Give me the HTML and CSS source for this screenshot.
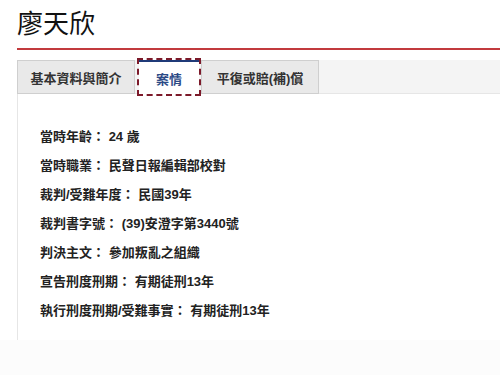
FILE: index.html
```html
<!DOCTYPE html>
<html lang="zh-Hant">
  <head>
    <meta charset="UTF-8" />
    <meta name="viewport" content="width=device-width, initial-scale=1.0" />
    <title>廖天欣</title>
    <link rel="stylesheet" href="styles.css">
  </head>
  <body>
    <div class="page">
      <div class="header">
        <h1>廖天欣</h1>
      </div>

      <div class="tabs">
        <div class="tab wide">基本資料與簡介</div>
        <div class="tab active">案情</div>
        <div class="tab wide">平復或賠(補)償</div>
      </div>

      <div class="panel">
        <div class="row"><span class="label">當時年齡：</span> 24 歲</div>
        <div class="row"><span class="label">當時職業：</span> 民聲日報編輯部校對</div>
        <div class="row"><span class="label">裁判/受難年度：</span> 民國39年</div>
        <div class="row"><span class="label">裁判書字號：</span> (39)安澄字第3440號</div>
        <div class="row"><span class="label">判決主文：</span> 參加叛亂之組織</div>
        <div class="row"><span class="label">宣告刑度刑期：</span> 有期徒刑13年</div>
        <div class="row"><span class="label">執行刑度刑期/受難事實：</span> 有期徒刑13年</div>
      </div>
    </div>
    <div class="footer"></div>
  </body>
</html>
```

FILE: styles.css
```css
body {
  margin: 0;
  font-family: "Liberation Sans", "Noto Sans CJK TC", sans-serif;
  color: #222;
  background-color: #fff;
}

.page {
  padding-left: 17px;
}

.header {
  padding-top: 9px;
  padding-bottom: 9px;
  border-bottom: 2px solid #c23a3d;
}

h1 {
  margin: 0;
  font-size: 26px;
  line-height: 30px;
  font-weight: normal;
  color: #111;
}

.tabs {
  display: flex;
  margin-top: 10px;
  height: 34px;
  background-color: #f4f4f4;
  border-bottom: 1px solid #e6e6e6;
  box-sizing: border-box;
}

.tab {
  box-sizing: border-box;
  flex: none;
  height: 34px;
  line-height: 35px;
  text-align: center;
  font-size: 13px;
  font-weight: bold;
  color: #333;
  background-color: #e9e9e9;
  border: 1px solid #cfcfcf;
}

.tab.wide {
  width: 118px;
}

.tab.active {
  width: 60px;
  margin: 0 2px 0 4px;
  line-height: 36px;
  height: 34px;
  color: #2c4a86;
  background-color: #fff;
  border: none;
  border-top: 2px solid #1f3a78;
  outline: 2px dashed #7c1a2a;
}

.panel {
  border-left: 1px solid #e6e6e6;
  padding: 28px 0 15px 22px;
}

.row {
  line-height: 29px;
  font-size: 13px;
  font-weight: bold;
  color: #222;
}

.footer {
  height: 40px;
  background-color: #fcfcfc;
}
```
